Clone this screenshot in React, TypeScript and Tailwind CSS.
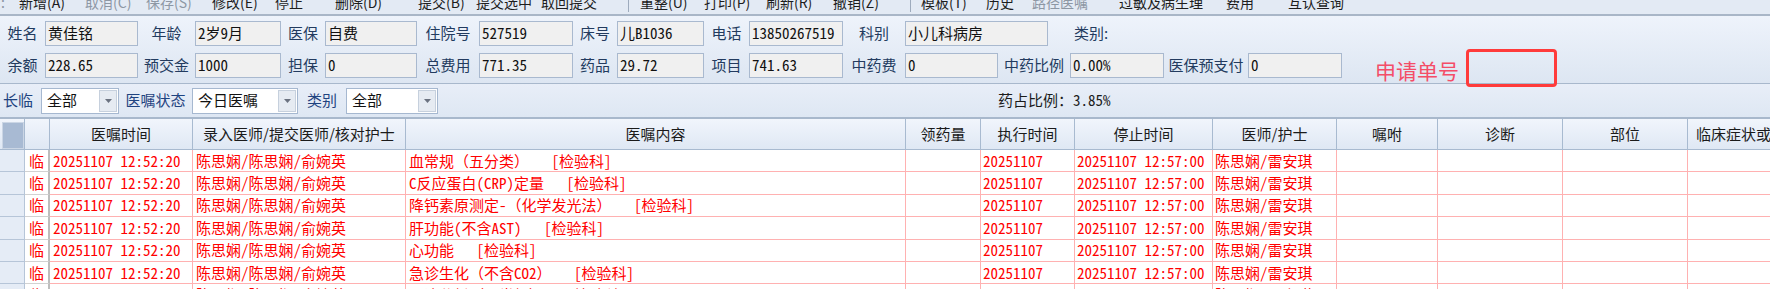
import React from 'react';

const cjk = "font-['Noto_Sans_CJK_SC',sans-serif]";
const hw = "[font-feature-settings:'hwid']";

// ASCII runs get half-width glyphs, full-width punctuation stays as it is
const Mixed: React.FC<{ text: string }> = ({ text }) => (
  <>
    {text.split(/([\x20-\x7e]+)/).map((p, i) =>
      /[\x20-\x7e]/.test(p) ? (
        <span key={i} className={hw}>{p}</span>
      ) : (
        <React.Fragment key={i}>{p}</React.Fragment>
      )
    )}
  </>
);

const toolbar: { text: string; w: string; off?: boolean; sep?: boolean }[] = [
  { text: '新增(A)', w: 'w-[66px]' },
  { text: '取消(C)', w: 'w-[61px]', off: true },
  { text: '保存(S)', w: 'w-[66px]', off: true },
  { text: '修改(E)', w: 'w-[63px]' },
  { text: '停止', w: 'w-[60px]' },
  { text: '删除(D)', w: 'w-[83px]' },
  { text: '提交(B)', w: 'w-[58px]' },
  { text: '提交选中', w: 'w-[65px]' },
  { text: '取回提交', w: 'w-[87px]' },
  { text: '', w: 'w-[12px]', sep: true },
  { text: '重整(U)', w: 'w-[64px]' },
  { text: '打印(P)', w: 'w-[62px]' },
  { text: '刷新(R)', w: 'w-[67px]' },
  { text: '撤销(Z)', w: 'w-[77px]' },
  { text: '', w: 'w-[11px]', sep: true },
  { text: '模板(T)', w: 'w-[65px]' },
  { text: '历史', w: 'w-[46px]' },
  { text: '路径医嘱', w: 'w-[87px]', off: true },
  { text: '过敏及病生理', w: 'w-[107px]' },
  { text: '费用', w: 'w-[62px]' },
  { text: '互认查询', w: 'w-[80px]' },
];

const Label: React.FC<{ w: string; children: React.ReactNode }> = ({ w, children }) => (
  <span className={`${w} shrink-0 text-center text-[15px] text-[#233b5f] whitespace-nowrap`}>{children}</span>
);

const Box: React.FC<{ w: string; value: string }> = ({ w, value }) => (
  <div className={`${w} shrink-0 h-[25px] bg-[#f0f0f0] border border-[#a9b9cf] flex items-center pl-[2px] text-[15px] text-[#111] whitespace-nowrap`}>
    <Mixed text={value} />
  </div>
);

const Select: React.FC<{ w: string; value: string }> = ({ w, value }) => (
  <div className={`${w} shrink-0 h-[26px] bg-white border border-[#a6b8d0] flex items-center justify-between pl-[5px] pr-[1px]`}>
    <span className="text-[15px] text-[#111]">{value}</span>
    <span className="w-[18px] h-[22px] bg-[#e6ebf2] border border-[#c6d0dd] flex items-center justify-center">
      <svg width="7" height="4" viewBox="0 0 7 4"><path d="M0 0h7L3.5 4z" fill="#6b7280" /></svg>
    </span>
  </div>
);

const cols = [
  'w-[25px]', 'w-[25px]', 'w-[143px]', 'w-[213px]', 'w-[500px]', 'w-[75px]', 'w-[94px]',
  'w-[138px]', 'w-[124px]', 'w-[101px]', 'w-[125px]', 'w-[125px]', 'w-[200px]',
];

const headers = ['', '', '医嘱时间', '录入医师/提交医师/核对护士', '医嘱内容', '领药量', '执行时间', '停止时间', '医师/护士', '嘱咐', '诊断', '部位', '临床症状或体征'];

const contents = [
  '血常规（五分类）   [检验科]',
  'C反应蛋白(CRP)定量   [检验科]',
  '降钙素原测定-（化学发光法）   [检验科]',
  '肝功能(不含AST)   [检验科]',
  '心功能   [检验科]',
  '急诊生化（不含CO2）   [检验科]',
  '尿液分析（尿常规）   [检验科]',
];

const cell = 'shrink-0 border-r border-b border-[#ffb1b1] flex items-center whitespace-pre overflow-hidden';

export default function App() {
  return (
    <div className={`w-[1770px] h-[289px] overflow-hidden bg-[#e4ebf5] ${cjk}`}>
      {/* toolbar, cut at the top */}
      <div className="h-[16px] overflow-hidden bg-[#e3eaf4] border-b-2 border-[#a9b6c7]">
        <div className="flex items-center -mt-[8px] h-[20px] text-[14px] leading-[20px] whitespace-nowrap">
          <span className="w-[19px] pl-[1px] text-[#8a94a3]">:</span>
          {toolbar.map((t, i) =>
            t.sep ? (
              <span key={i} className={`${t.w} shrink-0 h-[20px] flex`}>
                <span className="w-px h-[20px] bg-[#9eabbd]" />
              </span>
            ) : (
              <span key={i} className={`${t.w} shrink-0 ${t.off ? 'text-[#8d97a4]' : 'text-[#1d1d1d]'}`}>{t.text}</span>
            )
          )}
        </div>
      </div>

      {/* patient info */}
      <div className="h-[68px] border-b border-[#a8b8cc] bg-gradient-to-b from-[#eef3fb] to-[#dde6f2] pt-[5px] flex flex-col gap-[7px]">
        <div className="flex items-center h-[25px]">
          <Label w="w-[45px]">姓名</Label>
          <Box w="w-[93px]" value="黄佳铭" />
          <Label w="w-[57px]">年龄</Label>
          <Box w="w-[86px]" value="2岁9月" />
          <Label w="w-[44px]">医保</Label>
          <Box w="w-[92px]" value="自费" />
          <Label w="w-[62px]">住院号</Label>
          <Box w="w-[94px]" value="527519" />
          <Label w="w-[44px]">床号</Label>
          <Box w="w-[87px]" value="儿B1036" />
          <Label w="w-[45px]">电话</Label>
          <Box w="w-[94px]" value="13850267519" />
          <Label w="w-[62px]">科别</Label>
          <Box w="w-[143px]" value="小儿科病房" />
          <span className="ml-[26px] text-[15px] text-[#233b5f]">类别:</span>
        </div>
        <div className="flex items-center h-[25px]">
          <Label w="w-[45px]">余额</Label>
          <Box w="w-[93px]" value="228.65" />
          <Label w="w-[57px]">预交金</Label>
          <Box w="w-[86px]" value="1000" />
          <Label w="w-[44px]">担保</Label>
          <Box w="w-[92px]" value="0" />
          <Label w="w-[62px]">总费用</Label>
          <Box w="w-[94px]" value="771.35" />
          <Label w="w-[44px]">药品</Label>
          <Box w="w-[87px]" value="29.72" />
          <Label w="w-[45px]">项目</Label>
          <Box w="w-[94px]" value="741.63" />
          <Label w="w-[62px]">中药费</Label>
          <Box w="w-[93px]" value="0" />
          <Label w="w-[72px]">中药比例</Label>
          <Box w="w-[94px]" value="0.00%" />
          <Label w="w-[84px]">医保预支付</Label>
          <Box w="w-[94px]" value="0" />
          <span className="ml-[33px] mt-[9px] text-[21px] leading-[24px] text-[#f44d68] whitespace-nowrap">申请单号</span>
          <div className="ml-[7px] mt-[4px] w-[91px] h-[38px] shrink-0 border-[3px] border-[#ff3b3b] rounded-[4px]" />
        </div>
      </div>

      {/* filters */}
      <div className="h-[35px] border-b-2 border-[#a8b8cc] bg-gradient-to-b from-[#e8eef8] to-[#dee7f3] flex items-center">
        <span className="w-[41px] pl-[3px] text-[15px] text-[#1f4380]">长临</span>
        <Select w="w-[78px]" value="全部" />
        <span className="w-[73px] text-center text-[15px] text-[#1f4380]">医嘱状态</span>
        <Select w="w-[106px]" value="今日医嘱" />
        <span className="w-[48px] text-center text-[15px] text-[#1f4380]">类别</span>
        <Select w="w-[92px]" value="全部" />
        <span className="ml-[560px] text-[15px] text-[#1b1b1b] whitespace-nowrap">
          <Mixed text="药占比例：3.85%" />
        </span>
      </div>

      {/* grid */}
      <div className="bg-white">
        <div className="flex h-[31px] border-b border-[#a8bad0] bg-gradient-to-b from-[#f1f5fc] to-[#dfe8f4]">
          {headers.map((h, i) => (
            <div
              key={i}
              className={`${cols[i]} shrink-0 h-full border-r border-[#a8bad0] flex items-center ${i === 12 ? 'justify-start pl-[8px]' : 'justify-center'} text-[15px] text-[#1b1b1b] whitespace-nowrap overflow-hidden`}
            >
              {i === 0 ? (
                <div className="w-[23px] h-[27px] ml-[2px] mt-[3px] bg-[#a8bad3] border border-[#cbd6e5]" />
              ) : (
                h
              )}
            </div>
          ))}
        </div>
        {contents.map((c, r) => (
          <div key={r} className="flex h-[22.4px] text-[15px] leading-[20px] text-[#ff0000]">
            <div className="w-[25px] shrink-0 bg-[#e5ecf6] border-r border-b border-[#b6c5d8]" />
            <div className="w-[25px] shrink-0 bg-white border-b border-[#d2d2d2] border-r-2 border-r-[#bdbdbd] flex items-center justify-center">临</div>
            <div className={`w-[143px] pl-[3px] ${cell}`}><Mixed text="20251107 12:52:20" /></div>
            <div className={`w-[213px] pl-[3px] ${cell}`}><Mixed text="陈思娴/陈思娴/俞婉英" /></div>
            <div className={`w-[500px] pl-[3px] ${cell}`}><Mixed text={c} /></div>
            <div className={`w-[75px] ${cell}`} />
            <div className={`w-[94px] pl-[2px] ${cell}`}><Mixed text="20251107" /></div>
            <div className={`w-[138px] pl-[2px] ${cell}`}><Mixed text="20251107 12:57:00" /></div>
            <div className={`w-[124px] pl-[2px] ${cell}`}><Mixed text="陈思娴/雷安琪" /></div>
            <div className={`w-[101px] ${cell}`} />
            <div className={`w-[125px] ${cell}`} />
            <div className={`w-[125px] ${cell}`} />
            <div className={`w-[200px] ${cell}`} />
          </div>
        ))}
      </div>
    </div>
  );
}
